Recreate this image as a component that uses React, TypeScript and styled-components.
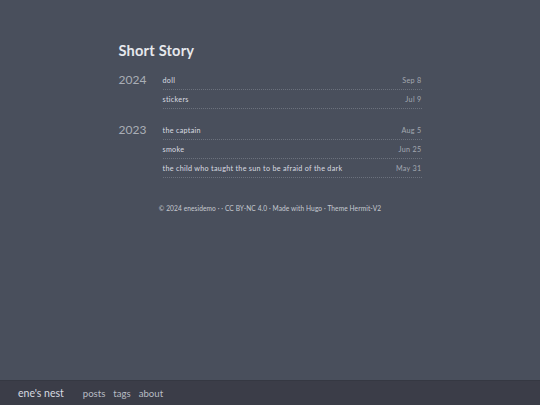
import React from "react";
import styled, { createGlobalStyle } from "styled-components";

const Global = createGlobalStyle`
  html, body { margin: 0; padding: 0; background: #494f5c; }
  body { font-family: Lato, "DejaVu Sans", sans-serif; }
  #root { min-height: 405px; }
`;

const Page = styled.div`
  display: flex;
  flex-direction: column;
  min-height: 405px;
  background: #494f5c;
`;

const Main = styled.main`
  flex: 1;
  width: 303px;
  margin: 0 auto;
  padding-top: 41px;
`;

const Title = styled.h1`
  margin: 0 0 10px;
  font-size: 14.6px;
  font-weight: bold;
  letter-spacing: 0.2px;
  color: #e6e8ec;
  line-height: 20px;
`;

const Section = styled.section`
  display: flex;
  margin-bottom: 12px;
`;

const Year = styled.div`
  width: 44px;
  flex: none;
  font-size: 12px;
  color: #a9aeb6;
  line-height: 17px;
`;

const List = styled.ul`
  flex: 1;
  margin: 0;
  padding: 0;
  list-style: none;
`;

const Row = styled.li`
  display: flex;
  justify-content: space-between;
  align-items: center;
  height: 18px;
  border-bottom: 1px dotted #6b717d;
  font-size: 7.2px;
  letter-spacing: 0.3px;
`;

const PostTitle = styled.span`
  color: #d9dce1;
`;

const PostDate = styled.span`
  color: #a3a8b1;
`;

const Credits = styled.div`
  margin-top: 26px;
  text-align: center;
  font-size: 6.6px;
  letter-spacing: 0.1px;
  color: #c6cad1;
`;

const Bar = styled.footer`
  height: 24px;
  display: flex;
  align-items: center;
  padding-left: 18px;
  background: #3b3d48;
  border-top: 1px solid #353842;
`;

const Brand = styled.span`
  font-size: 10.5px;
  color: #d8dbe0;
  margin-right: 19px;
`;

const NavLink = styled.a`
  font-size: 9.6px;
  color: #b8bcc4;
  margin-right: 8px;
  text-decoration: none;
`;

const years = [
  {
    year: "2024",
    posts: [
      { t: "doll", d: "Sep 8" },
      { t: "stickers", d: "Jul 9" },
    ],
  },
  {
    year: "2023",
    posts: [
      { t: "the captain", d: "Aug 5" },
      { t: "smoke", d: "Jun 25" },
      { t: "the child who taught the sun to be afraid of the dark", d: "May 31" },
    ],
  },
];

export default function App() {
  return (
    <Page>
      <Global />
      <Main>
        <Title>Short Story</Title>
        {years.map((y) => (
          <Section key={y.year}>
            <Year>{y.year}</Year>
            <List>
              {y.posts.map((p) => (
                <Row key={p.t}>
                  <PostTitle>{p.t}</PostTitle>
                  <PostDate>{p.d}</PostDate>
                </Row>
              ))}
            </List>
          </Section>
        ))}
        <Credits>© 2024 enesidemo · · CC BY-NC 4.0 · Made with Hugo · Theme Hermit-V2</Credits>
      </Main>
      <Bar>
        <Brand>ene's nest</Brand>
        <NavLink href="#">posts</NavLink>
        <NavLink href="#">tags</NavLink>
        <NavLink href="#">about</NavLink>
      </Bar>
    </Page>
  );
}
